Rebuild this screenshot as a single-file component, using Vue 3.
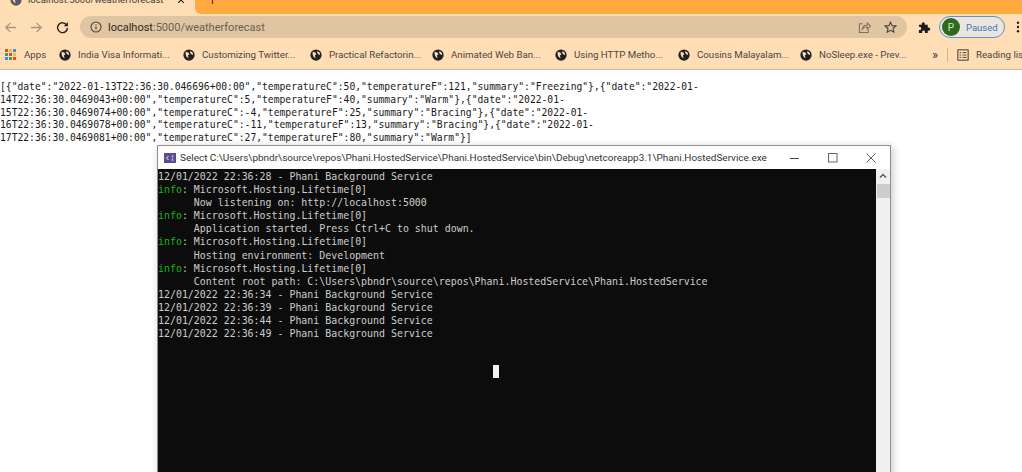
<script setup>
const bookmarks = [
  { label: 'India Visa Informati...', width: 124 },
  { label: 'Customizing Twitter...', width: 127 },
  { label: 'Practical Refactorin...', width: 122 },
  { label: 'Animated Web Ban...', width: 123 },
  { label: 'Using HTTP Metho...', width: 123 },
  { label: 'Cousins Malayalam...', width: 122 },
  { label: 'NoSleep.exe - Prev...', width: 124 },
]
const json = [
  '[{"date":"2022-01-13T22:36:30.046696+00:00","temperatureC":50,"temperatureF":121,"summary":"Freezing"},{"date":"2022-01-',
  '14T22:36:30.0469043+00:00","temperatureC":5,"temperatureF":40,"summary":"Warm"},{"date":"2022-01-',
  '15T22:36:30.0469074+00:00","temperatureC":-4,"temperatureF":25,"summary":"Bracing"},{"date":"2022-01-',
  '16T22:36:30.0469078+00:00","temperatureC":-11,"temperatureF":13,"summary":"Bracing"},{"date":"2022-01-',
  '17T22:36:30.0469081+00:00","temperatureC":27,"temperatureF":80,"summary":"Warm"}]',
]
const consoleLines = [
  { text: '12/01/2022 22:36:28 - Phani Background Service' },
  { info: true, text: 'Microsoft.Hosting.Lifetime[0]' },
  { text: '      Now listening on: http://localhost:5000' },
  { info: true, text: 'Microsoft.Hosting.Lifetime[0]' },
  { text: '      Application started. Press Ctrl+C to shut down.' },
  { info: true, text: 'Microsoft.Hosting.Lifetime[0]' },
  { text: '      Hosting environment: Development' },
  { info: true, text: 'Microsoft.Hosting.Lifetime[0]' },
  { text: '      Content root path: C:\\Users\\pbndr\\source\\repos\\Phani.HostedService\\Phani.HostedService' },
  { text: '12/01/2022 22:36:34 - Phani Background Service' },
  { text: '12/01/2022 22:36:39 - Phani Background Service' },
  { text: '12/01/2022 22:36:44 - Phani Background Service' },
  { text: '12/01/2022 22:36:49 - Phani Background Service' },
]
const appColors = ['#e8453c','#f9bb2d','#4285f4','#34a853','#e8453c','#f9bb2d','#4285f4','#34a853','#e8453c']
</script>

<template>
  <div class="page">
    <header class="tabstrip">
      <div class="tab">
        <svg class="tab-globe" viewBox="0 0 16 16"><circle cx="8" cy="8" r="7.500" fill="#5a5a5e"/><path d="M3.500 3.500l3.500 1 1.500 2.500-2 1.500 1 4-3-2.500-1-3zM10 2.500l3 2.500.5 3-2.500-1-1.500-2z" fill="#ffddb5"/></svg>
        <span class="tab-title">localhost:5000/weatherforecast</span>
        <svg class="tab-x" viewBox="0 0 10 10"><path d="M1.500 1.500l7 7M8.500 1.500l-7 7" stroke="#222" stroke-width="1.400"/></svg>
      </div>
      <div class="tab-rest">
        <svg class="tab-plus" viewBox="0 0 10 10"><path d="M5 0v10M0 5h10" stroke="#5b3a10" stroke-width="1.300"/></svg>
      </div>
    </header>

    <div class="toolbar">
      <svg class="nav back" viewBox="0 0 14 14"><path d="M13 7H2M7 2L2 7l5 5" fill="none" stroke="#a99680" stroke-width="1.400"/></svg>
      <svg class="nav fwd" viewBox="0 0 14 14"><path d="M1 7h11M7 2l5 5-5 5" fill="none" stroke="#a99680" stroke-width="1.400"/></svg>
      <svg class="nav reload" viewBox="0 0 14 14"><path d="M11.600 4.600A5.300 5.300 0 1 0 12.300 7.400" fill="none" stroke="#222" stroke-width="1.500"/><path d="M12.800 1.200v4.400H8.400z" fill="#222"/></svg>
      <div class="omnibox">
        <svg class="info" viewBox="0 0 12 12"><circle cx="6" cy="6" r="5" fill="none" stroke="#4b4238" stroke-width="1.100"/><path d="M6 5.200v3.400M6 3.200v1.100" stroke="#4b4238" stroke-width="1.100"/></svg>
        <span class="url"><span class="host">localhost</span>:5000/weatherforecast</span>
        <svg class="omni-share" viewBox="0 0 14 14"><path d="M5 3H1.500v9.500H11V9" fill="none" stroke="#7a6f62" stroke-width="1.100"/><path d="M4.500 9c.4-3 2.500-4.600 5.500-4.600V2l3.500 3.400L10 8.600V6.300c-2.300 0-4 .8-5.500 2.700z" fill="none" stroke="#7a6f62" stroke-width="1.100"/></svg>
        <svg class="omni-star" viewBox="0 0 14 14"><path d="M7 1.300l1.700 3.700 4 .4-3 2.700.9 4L7 10.100l-3.600 2 .9-4-3-2.700 4-.4z" fill="none" stroke="#4b4238" stroke-width="1.200"/></svg>
      </div>
      <svg class="puzzle" viewBox="0 0 14 14"><path d="M1 4h3V3a1.700 1.700 0 0 1 3.400 0v1h3.100v3h1a1.700 1.700 0 0 1 0 3.400h-1V13H7.500v-1.200a1.500 1.500 0 0 0-3 0V13H1V9.700h.8a1.700 1.700 0 0 0 0-3.400H1z" fill="#1d1d1d"/></svg>
      <div class="profile">
        <span class="avatar">P</span>
        <span class="paused">Paused</span>
      </div>
      <svg class="menu" viewBox="0 0 4 14"><circle cx="2" cy="2" r="1.400"/><circle cx="2" cy="7" r="1.400"/><circle cx="2" cy="12" r="1.400"/></svg>
    </div>

    <nav class="bookmarks">
      <div class="apps">
        <div class="apps-grid"><i v-for="(c, i) in appColors" :key="i" :style="{ background: c }"></i></div>
        <span>Apps</span>
      </div>
      <div v-for="b in bookmarks" :key="b.label" class="bm" :style="{ width: b.width + 'px' }">
        <svg viewBox="0 0 16 16"><circle cx="8" cy="8" r="7.500" fill="#202124"/><path d="M3.500 3.500l3.500 1 1.500 2.500-2 1.500 1 4-3-2.500-1-3zM10 2.500l3 2.500.5 3-2.500-1-1.500-2z" fill="#ffddb5"/></svg>
        <span>{{ b.label }}</span>
      </div>
      <span class="more">»</span>
      <span class="sep"></span>
      <svg class="list" viewBox="0 0 14 14"><rect x="1" y="1" width="12" height="12" fill="none" stroke="#333" stroke-width="1.100"/><path d="M3 4.200h2M3 7h2M3 9.800h2M6.500 4.200h4.500M6.500 7h4.500M6.500 9.800h4.500" stroke="#333" stroke-width="1"/></svg>
      <span class="reading">Reading list</span>
    </nav>

    <main class="content">
      <div v-for="l in json" :key="l" class="json-line">{{ l }}</div>

      <section class="window">
        <div class="titlebar">
          <svg class="cs" viewBox="0 0 12 10"><rect width="12" height="10" fill="#5c4b8f"/><path d="M4.500 3L2.500 5l2 2M7.500 3h2M7.500 7h2M8 5h1" stroke="#fff" stroke-width=".9" fill="none"/></svg>
          <span class="win-title">Select C:\Users\pbndr\source\repos\Phani.HostedService\Phani.HostedService\bin\Debug\netcoreapp3.1\Phani.HostedService.exe</span>
          <div class="win-controls">
            <svg viewBox="0 0 10 10"><path d="M0 5.500h9" stroke="#444" stroke-width="1"/></svg>
            <svg viewBox="0 0 10 10"><rect x=".5" y=".5" width="8.500" height="8.500" fill="none" stroke="#666" stroke-width="1"/></svg>
            <svg viewBox="0 0 10 10"><path d="M.5.500l9 9M9.500.500l-9 9" stroke="#555" stroke-width=".9"/></svg>
          </div>
        </div>
        <div class="win-body">
          <div class="terminal">
            <div v-for="(l, i) in consoleLines" :key="i" class="term-line"><template v-if="l.info"><span class="green">info</span>: </template>{{ l.text }}</div>
            <span class="cursor"></span>
          </div>
          <div class="scrollbar">
            <svg viewBox="0 0 8 6"><path d="M1 4.500l3-3 3 3" fill="none" stroke="#555" stroke-width="1.400"/></svg>
            <span class="thumb"></span>
          </div>
        </div>
      </section>
    </main>
  </div>
</template>

<style scoped>
.page { width: 1022px; height: 472px; overflow: hidden; display: flex; flex-direction: column; background: #fff; font-family: Roboto, "Open Sans", sans-serif; }
.tabstrip { height: 14px; flex: none; background: #ffddb5; display: flex; overflow: hidden; }
.tab { width: 195px; height: 14px; flex: none; display: flex; align-items: center; padding: 0 10px 14px 10px; box-sizing: border-box; }
.tab-globe { width: 12px; height: 12px; flex: none; }
.tab-title { font-size: 9.500px; line-height: 12px; color: #45403a; margin-left: 6px; white-space: nowrap; flex: 1; }
.tab-x { width: 8px; height: 8px; flex: none; }
.tab-rest { flex: 1; height: 13.500px; background: #ffa93e; border-bottom-left-radius: 6px; padding-left: 13px; overflow: hidden; }
.tab-plus { display: block; width: 9px; height: 9px; margin-top: -5px; }
.toolbar { height: 26px; flex: none; background: #ffddb5; display: flex; align-items: center; }
.nav { width: 13px; height: 13px; flex: none; }
.back { margin-left: 4px; }
.fwd { margin-left: 13px; }
.reload { margin-left: 13px; }
.omnibox { width: 827px; height: 22px; margin-left: 11px; flex: none; background: #dfc5a2; border-radius: 11px; display: flex; align-items: center; padding: 0 10px 0 10px; box-sizing: border-box; }
.info { width: 12px; height: 12px; flex: none; }
.url { font-size: 11px; color: #6b6052; margin-left: 6px; flex: 1; }
.host { color: #2c2824; }
.omni-share { width: 13px; height: 13px; margin-right: 13px; }
.omni-star { width: 13px; height: 13px; }
.puzzle { width: 13px; height: 13px; margin-left: 11px; flex: none; }
.profile { width: 66px; height: 22px; margin-left: 8px; padding-left: 2px; box-sizing: border-box; border: 1px solid #5f94d4; border-radius: 11px; background: #ebe5dc; display: flex; align-items: center; flex: none; }
.avatar { width: 18px; height: 18px; border-radius: 50%; background: #2e6a1d; color: #d8e6cf; font-size: 10px; display: flex; align-items: center; justify-content: center; }
.paused { font-size: 9.500px; color: #3f78bf; margin-left: 6px; }
.menu { width: 4px; height: 12px; margin-left: 11px; fill: #222; flex: none; }
.bookmarks { height: 30px; flex: none; box-sizing: border-box; background: #ffddb5; border-bottom: 1px solid #cdbba4; display: flex; align-items: center; padding-left: 5px; color: #4b463f; font-size: 9.700px; white-space: nowrap; overflow: hidden; }
.apps { display: flex; align-items: center; width: 54px; flex: none; }
.apps-grid { width: 11px; height: 11px; display: grid; grid-template-columns: repeat(3, 3px); grid-auto-rows: 3px; gap: 1px; }
.apps span { margin-left: 8px; }
.bm { display: flex; align-items: center; flex: none; }
.bm svg { width: 12px; height: 12px; flex: none; }
.bm span { margin-left: 7px; }
.more { width: 22px; text-align: center; font-size: 12px; color: #222; flex: none; }
.sep { width: 1px; height: 14px; background: #c9b59c; flex: none; margin-left: 1px; }
.list { width: 12px; height: 12px; flex: none; margin-left: 9px; }
.reading { margin-left: 7px; }
.content { position: relative; flex: 1; padding-top: 10px; font-family: "DejaVu Sans Mono", monospace; font-size: 9.690px; line-height: 13px; color: #1a1a1a; white-space: pre; }
.json-line { height: 12.750px; }
.window { position: absolute; left: 157px; top: 75px; width: 734px; height: 340px; box-sizing: border-box; border: 1px solid #8f8f8f; border-bottom: none; background: #fff; box-shadow: 2px 2px 8px rgba(0,0,0,.22); display: flex; flex-direction: column; font-family: Roboto, sans-serif; }
.titlebar { height: 23px; flex: none; display: flex; align-items: center; padding-left: 6px; }
.cs { width: 12px; height: 10px; flex: none; }
.win-title { font-size: 9.980px; color: #333; margin-left: 4px; flex: 1; white-space: nowrap; overflow: hidden; }
.win-controls { display: flex; align-items: center; flex: none; gap: 28px; padding-right: 14px; }
.win-controls svg { width: 10px; height: 10px; }
.win-body { flex: 1; display: flex; min-height: 0; }
.terminal { flex: 1; background: #0c0c0c; color: #cccccc; font-family: "DejaVu Sans Mono", monospace; font-size: 9.940px; line-height: 13.100px; position: relative; white-space: pre; padding-top: 1px; }
.term-line { height: 13.100px; }
.green { color: #16b50e; }
.cursor { position: absolute; left: 335px; top: 196px; width: 6px; height: 13px; background: #f2f2f2; }
.scrollbar { width: 14px; flex: none; background: #f0f0f0; display: flex; flex-direction: column; align-items: center; }
.scrollbar svg { width: 8px; height: 6px; margin: 4px 0 5px; }
.thumb { width: 13px; height: 14px; background: #cdcdcd; }
</style>
